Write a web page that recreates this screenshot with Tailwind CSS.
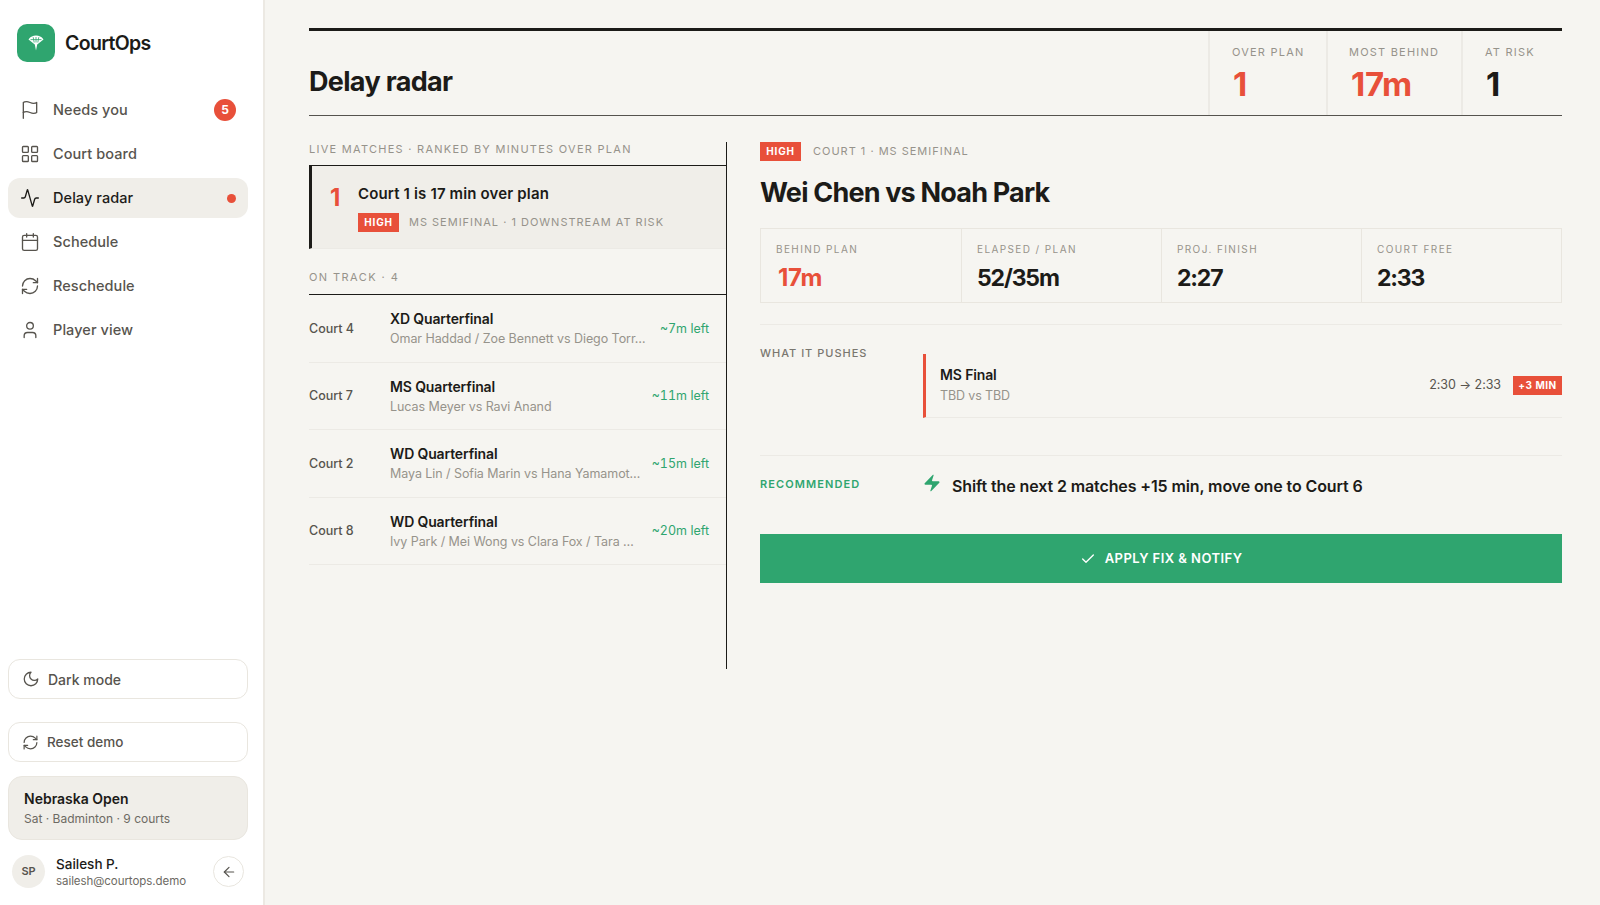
<!DOCTYPE html>
<html>
<head>
  <title>CourtOps - Delay radar</title>
  <meta charset="UTF-8">
  <script src="https://cdn.jsdelivr.net/npm/@tailwindcss/browser@4"></script>
</head>
<body class="h-[905px] overflow-hidden bg-[#f6f5f1] font-['Inter',sans-serif] text-[#1c1b18]">
  <div class="flex h-[905px]">
    <!-- Sidebar -->
    <aside class="flex w-[265px] shrink-0 flex-col border-r-2 border-[#ece9e3] bg-white pr-[15px] pl-2">
      <div class="mt-6 flex h-[38px] items-center gap-[10px] pl-[9px]">
        <div class="flex h-[38px] w-[38px] items-center justify-center rounded-[10px] bg-[#2fa56f]">
          <svg class="h-4 w-4" viewBox="0 0 16 16" fill="#fff"><path d="M8 15.500 6.800 9.500.5 4.500C2.500 1.500 5 .5 8 .5s5.500 1 7.500 4L9.200 9.500z"/><path d="M5.200 2.200 6.200 7.500M8 2v5.500M10.800 2.200 9.800 7.500M2.500 4.600h11" stroke="#2fa56f" stroke-width=".8" fill="none"/></svg>
        </div>
        <span class="pt-[2px] text-[19.5px] leading-none font-semibold tracking-[-0.035em]">CourtOps</span>
      </div>

      <nav class="mt-[28px] flex flex-col gap-1 text-[14.5px] font-medium tracking-[0.005em] text-[#57544e]">
        <a class="flex h-10 items-center gap-[13px] rounded-xl px-3">
          <svg class="h-5 w-5" viewBox="0 0 24 24" fill="none" stroke="currentColor" stroke-width="1.6" stroke-linecap="round" stroke-linejoin="round"><path d="M4 15s1-1 4-1 5 2 8 2 4-1 4-1V3s-1 1-4 1-5-2-8-2-4 1-4 1z"/><path d="M4 22v-7"/></svg>
          <span class="flex-1">Needs you</span>
          <span class="flex h-[22px] w-[22px] items-center justify-center rounded-full bg-[#e8503a] text-[12px] font-bold text-white">5</span>
        </a>
        <a class="flex h-10 items-center gap-[13px] rounded-xl px-3">
          <svg class="h-5 w-5" viewBox="0 0 24 24" fill="none" stroke="currentColor" stroke-width="1.6" stroke-linecap="round" stroke-linejoin="round"><rect x="3" y="3" width="7" height="7" rx="1"/><rect x="14" y="3" width="7" height="7" rx="1"/><rect x="14" y="14" width="7" height="7" rx="1"/><rect x="3" y="14" width="7" height="7" rx="1"/></svg>
          <span>Court board</span>
        </a>
        <a class="flex h-10 items-center gap-[13px] rounded-xl bg-[#f0eee9] px-3 text-[#1c1b18]">
          <svg class="h-5 w-5" viewBox="0 0 24 24" fill="none" stroke="currentColor" stroke-width="1.6" stroke-linecap="round" stroke-linejoin="round"><path d="M22 12h-2.480a2 2 0 0 0-1.930 1.460l-2.350 8.360a.25.25 0 0 1-.48 0L9.240 2.180a.25.25 0 0 0-.48 0l-2.350 8.360A2 2 0 0 1 4.490 12H2"/></svg>
          <span class="flex-1">Delay radar</span>
          <span class="h-[9px] w-[9px] rounded-full bg-[#e8503a]"></span>
        </a>
        <a class="flex h-10 items-center gap-[13px] rounded-xl px-3">
          <svg class="h-5 w-5" viewBox="0 0 24 24" fill="none" stroke="currentColor" stroke-width="1.6" stroke-linecap="round" stroke-linejoin="round"><path d="M8 2v4M16 2v4"/><rect x="3" y="4" width="18" height="18" rx="2"/><path d="M3 10h18"/></svg>
          <span>Schedule</span>
        </a>
        <a class="flex h-10 items-center gap-[13px] rounded-xl px-3">
          <svg class="h-5 w-5" viewBox="0 0 24 24" fill="none" stroke="currentColor" stroke-width="1.6" stroke-linecap="round" stroke-linejoin="round"><path d="M3 12a9 9 0 0 1 9-9 9.750 9.750 0 0 1 6.740 2.740L21 8"/><path d="M21 3v5h-5"/><path d="M21 12a9 9 0 0 1-9 9 9.750 9.750 0 0 1-6.740-2.740L3 16"/><path d="M8 16H3v5"/></svg>
          <span>Reschedule</span>
        </a>
        <a class="flex h-10 items-center gap-[13px] rounded-xl px-3">
          <svg class="h-5 w-5" viewBox="0 0 24 24" fill="none" stroke="currentColor" stroke-width="1.6" stroke-linecap="round" stroke-linejoin="round"><path d="M19 21v-2a4 4 0 0 0-4-4H9a4 4 0 0 0-4 4v2"/><circle cx="12" cy="7" r="4"/></svg>
          <span>Player view</span>
        </a>
      </nav>

      <button class="mt-auto flex h-10 items-center gap-[8px] rounded-xl border border-[#e9e6df] bg-white px-[13px] text-[14px] font-medium text-[#57544e]">
        <svg class="h-[18px] w-[18px]" viewBox="0 0 24 24" fill="none" stroke="currentColor" stroke-width="1.7" stroke-linecap="round" stroke-linejoin="round"><path d="M12 3a6 6 0 0 0 9 9 9 9 0 1 1-9-9Z"/></svg>
        Dark mode
      </button>
      <button class="mt-[23px] flex h-10 items-center gap-[8px] rounded-xl border border-[#e9e6df] bg-white px-[13px] text-[13.5px] font-medium text-[#57544e]">
        <svg class="h-[17px] w-[17px]" viewBox="0 0 24 24" fill="none" stroke="currentColor" stroke-width="1.7" stroke-linecap="round" stroke-linejoin="round"><path d="M3 12a9 9 0 0 1 9-9 9.750 9.750 0 0 1 6.740 2.740L21 8"/><path d="M21 3v5h-5"/><path d="M21 12a9 9 0 0 1-9 9 9.750 9.750 0 0 1-6.740-2.740L3 16"/><path d="M8 16H3v5"/></svg>
        Reset demo
      </button>
      <div class="mt-[14px] h-[64px] rounded-[14px] border border-[#e9e6df] bg-[#f0eee9] px-[15px] pt-[13px]">
        <div class="text-[14px] leading-[18px] font-semibold">Nebraska Open</div>
        <div class="mt-[3px] text-[12px] leading-4 text-[#6d6a63]">Sat · Badminton · 9 courts</div>
      </div>
      <div class="mt-[14px] mb-[16px] flex items-center pl-1">
        <div class="flex h-[33px] w-[33px] items-center justify-center rounded-full bg-[#f0eee9] text-[11px] font-semibold text-[#57544e]">SP</div>
        <div class="ml-[11px] flex-1 pt-[1px]">
          <div class="text-[13.5px] leading-[18px] font-medium">Sailesh P.</div>
          <div class="text-[11.5px] leading-4 tracking-[-0.005em] text-[#6d6a63]">sailesh@courtops.demo</div>
        </div>
        <div class="mr-[4px] flex h-[31px] w-[31px] items-center justify-center rounded-full border border-[#e9e6df] text-[#57544e]">
          <svg class="h-4 w-4" viewBox="0 0 24 24" fill="none" stroke="currentColor" stroke-width="1.8" stroke-linecap="round" stroke-linejoin="round"><path d="m12 19-7-7 7-7"/><path d="M19 12H5"/></svg>
        </div>
      </div>
    </aside>

    <!-- Main -->
    <main class="flex-1 pt-[28px] pr-[38px] pl-[44px]">
      <header class="flex h-[88px] items-stretch border-t-[3px] border-b border-t-[#1c1b18] border-b-[#55534e]">
        <h1 class="flex-1 pt-[33px] text-[27px] leading-[36px] font-bold tracking-[-0.025em]">Delay radar</h1>
        <div class="w-[118px] border-l-2 border-[#eceae5] pt-[14px] pl-[22px]">
          <div class="text-[11px] leading-[14px] tracking-[0.11em] text-[#96938b]">OVER PLAN</div>
          <div class="mt-[5px] ml-[1px] text-[33px] leading-[40px] font-bold tracking-[-0.01em] text-[#e8503a]">1</div>
        </div>
        <div class="w-[135px] border-l-2 border-[#eceae5] pt-[14px] pl-[21px]">
          <div class="text-[11px] leading-[14px] tracking-[0.11em] text-[#96938b]">MOST BEHIND</div>
          <div class="mt-[5px] ml-[2px] text-[33px] leading-[40px] font-bold tracking-[-0.01em] text-[#e8503a]">17m</div>
        </div>
        <div class="w-[101px] border-l-2 border-[#eceae5] pt-[14px] pl-[22px]">
          <div class="text-[11px] leading-[14px] tracking-[0.11em] text-[#96938b]">AT RISK</div>
          <div class="mt-[5px] ml-[1px] text-[33px] leading-[40px] font-bold">1</div>
        </div>
      </header>

      <div class="mt-[26px] flex">
        <!-- Match list -->
        <section class="h-[527px] w-[418px] shrink-0 border-r border-[#1c1b18]">
          <div class="text-[11px] leading-[14px] tracking-[0.115em] text-[#96938b]">LIVE MATCHES · RANKED BY MINUTES OVER PLAN</div>
          <div class="mt-[9px] flex h-[84px] border-t border-b border-l-[3px] border-t-[#1c1b18] border-b-[#eceae5] border-l-[#1c1b18] bg-[#f0eee9]">
            <div class="w-[46px] pt-[17px] pl-[18px] text-[24px] leading-[30px] font-bold text-[#e8503a]">1</div>
            <div class="pt-[18px]">
              <div class="text-[15px] leading-[20px] font-semibold tracking-[0.01em]">Court 1 is 17 min over plan</div>
              <div class="mt-[9px] flex items-center gap-[10px]">
                <span class="flex h-[19px] w-[41px] items-center justify-center bg-[#e8503a] text-[10px] font-bold tracking-[0.08em] text-white">HIGH</span>
                <span class="text-[11px] tracking-[0.09em] text-[#96938b]">MS SEMIFINAL · 1 DOWNSTREAM AT RISK</span>
              </div>
            </div>
          </div>
          <div class="mt-[21px] border-b border-[#1c1b18] pb-[10px] text-[11px] leading-[14px] tracking-[0.13em] text-[#96938b]">ON TRACK · 4</div>
          <div class="flex h-[67.5px] items-center border-b border-[#eceae5] pt-[2px] pr-[17px]">
            <div class="w-[81px] shrink-0 text-[12.5px] font-medium text-[#57544e]">Court 4</div>
            <div class="flex-1 whitespace-nowrap">
              <div class="text-[14px] leading-[20px] font-semibold tracking-[-0.01em]">XD Quarterfinal</div>
              <div class="text-[12.5px] leading-[20px] tracking-[-0.005em] text-[#96938b]">Omar Haddad / Zoe Bennett vs Diego Torr…</div>
            </div>
            <div class="shrink-0 text-[12.5px] text-[#2fa56f] tabular-nums">~7m left</div>
          </div>
          <div class="flex h-[67.5px] items-center border-b border-[#eceae5] pt-[2px] pr-[17px]">
            <div class="w-[81px] shrink-0 text-[12.5px] font-medium text-[#57544e]">Court 7</div>
            <div class="flex-1 whitespace-nowrap">
              <div class="text-[14px] leading-[20px] font-semibold tracking-[-0.01em]">MS Quarterfinal</div>
              <div class="text-[12.5px] leading-[20px] tracking-[-0.005em] text-[#96938b]">Lucas Meyer vs Ravi Anand</div>
            </div>
            <div class="shrink-0 text-[12.5px] text-[#2fa56f] tabular-nums">~11m left</div>
          </div>
          <div class="flex h-[67.5px] items-center border-b border-[#eceae5] pt-[2px] pr-[17px]">
            <div class="w-[81px] shrink-0 text-[12.5px] font-medium text-[#57544e]">Court 2</div>
            <div class="flex-1 whitespace-nowrap">
              <div class="text-[14px] leading-[20px] font-semibold tracking-[-0.01em]">WD Quarterfinal</div>
              <div class="text-[12.5px] leading-[20px] tracking-[-0.005em] text-[#96938b]">Maya Lin / Sofia Marin vs Hana Yamamot…</div>
            </div>
            <div class="shrink-0 text-[12.5px] text-[#2fa56f] tabular-nums">~15m left</div>
          </div>
          <div class="flex h-[67.5px] items-center border-b border-[#eceae5] pt-[2px] pr-[17px]">
            <div class="w-[81px] shrink-0 text-[12.5px] font-medium text-[#57544e]">Court 8</div>
            <div class="flex-1 whitespace-nowrap">
              <div class="text-[14px] leading-[20px] font-semibold tracking-[-0.01em]">WD Quarterfinal</div>
              <div class="text-[12.5px] leading-[20px] tracking-[-0.005em] text-[#96938b]">Ivy Park / Mei Wong vs Clara Fox / Tara …</div>
            </div>
            <div class="shrink-0 text-[12.5px] text-[#2fa56f] tabular-nums">~20m left</div>
          </div>
        </section>

        <!-- Detail -->
        <section class="flex-1 pl-[33px]">
          <div class="flex items-center gap-[12px]">
            <span class="flex h-[19px] w-[41px] items-center justify-center bg-[#e8503a] text-[10px] font-bold tracking-[0.08em] text-white">HIGH</span>
            <span class="text-[11px] tracking-[0.09em] text-[#96938b]">COURT 1 · MS SEMIFINAL</span>
          </div>
          <h2 class="mt-[14px] text-[27px] leading-[36px] font-bold tracking-[-0.03em]">Wei Chen vs Noah Park</h2>
          <div class="mt-[17px] grid h-[75px] grid-cols-4 border border-[#e9e6df]">
            <div class="pt-[13px] pl-[15px]">
              <div class="text-[10px] leading-[14px] tracking-[0.14em] text-[#96938b]">BEHIND PLAN</div>
              <div class="mt-[7px] ml-[2px] text-[24px] leading-[30px] font-bold tracking-[-0.01em] text-[#e8503a]">17m</div>
            </div>
            <div class="border-l border-[#e9e6df] pt-[13px] pl-[15px]">
              <div class="text-[10px] leading-[14px] tracking-[0.14em] text-[#96938b]">ELAPSED / PLAN</div>
              <div class="mt-[7px] text-[23px] leading-[30px] font-bold tracking-[-0.05em]">52/35m</div>
            </div>
            <div class="border-l border-[#e9e6df] pt-[13px] pl-[15px]">
              <div class="text-[10px] leading-[14px] tracking-[0.14em] text-[#96938b]">PROJ. FINISH</div>
              <div class="mt-[7px] text-[23px] leading-[30px] font-bold tracking-[-0.05em]">2:27</div>
            </div>
            <div class="border-l border-[#e9e6df] pt-[13px] pl-[15px]">
              <div class="text-[10px] leading-[14px] tracking-[0.14em] text-[#96938b]">COURT FREE</div>
              <div class="mt-[7px] text-[23px] leading-[30px] font-bold tracking-[-0.05em]">2:33</div>
            </div>
          </div>

          <div class="mt-[21px] flex h-[132px] items-start border-t border-b border-[#eceae5] pt-[21px]">
            <div class="w-[163px] shrink-0 text-[11px] leading-[14px] font-medium tracking-[0.09em] text-[#7a776f]">WHAT IT PUSHES</div>
            <div class="mt-[8px] flex h-[64px] flex-1 items-center border-b border-l-[3px] border-b-[#eceae5] border-l-[#e8503a] pl-[14px]">
              <div class="flex-1">
                <div class="text-[14px] leading-[20px] font-semibold tracking-[-0.01em]">MS Final</div>
                <div class="mt-[1px] text-[12.5px] leading-[20px] tracking-[-0.01em] text-[#96938b]">TBD vs TBD</div>
              </div>
              <span class="text-[12.5px] tracking-[-0.005em] text-[#57544e]">2:30 → 2:33</span>
              <span class="ml-3 flex h-[19px] w-[49px] items-center justify-center bg-[#e8503a] text-[10px] font-bold tracking-[0.05em] text-white">+3 MIN</span>
            </div>
          </div>

          <div class="mt-[18px] flex h-[24px] items-center">
            <div class="-mt-[4px] w-[162px] shrink-0 text-[11px] font-semibold tracking-[0.1em] text-[#2fa56f]">RECOMMENDED</div>
            <svg class="-mt-[6px] h-5 w-5 shrink-0" viewBox="0 0 24 24" fill="#2fa56f"><path d="M4 14a1 1 0 0 1-.78-1.630l9.900-10.200a.5.5 0 0 1 .86.46l-1.920 6.020A1 1 0 0 0 13 10h7a1 1 0 0 1 .78 1.630l-9.900 10.200a.5.5 0 0 1-.86-.46l1.920-6.020A1 1 0 0 0 11 14z"/></svg>
            <div class="ml-[10px] text-[16px] font-semibold tracking-[-0.007em]">Shift the next 2 matches +15 min, move one to Court 6</div>
          </div>

          <button class="mt-[36px] flex h-[49px] w-full items-center justify-center gap-[9px] bg-[#2fa56f] text-[13px] font-semibold tracking-[0.035em] text-white">
            <svg class="h-4 w-4" viewBox="0 0 24 24" fill="none" stroke="currentColor" stroke-width="2" stroke-linecap="round" stroke-linejoin="round"><path d="M20 6 9 17l-5-5"/></svg>
            APPLY FIX &amp; NOTIFY
          </button>
        </section>
      </div>
    </main>
  </div>
</body>
</html>
